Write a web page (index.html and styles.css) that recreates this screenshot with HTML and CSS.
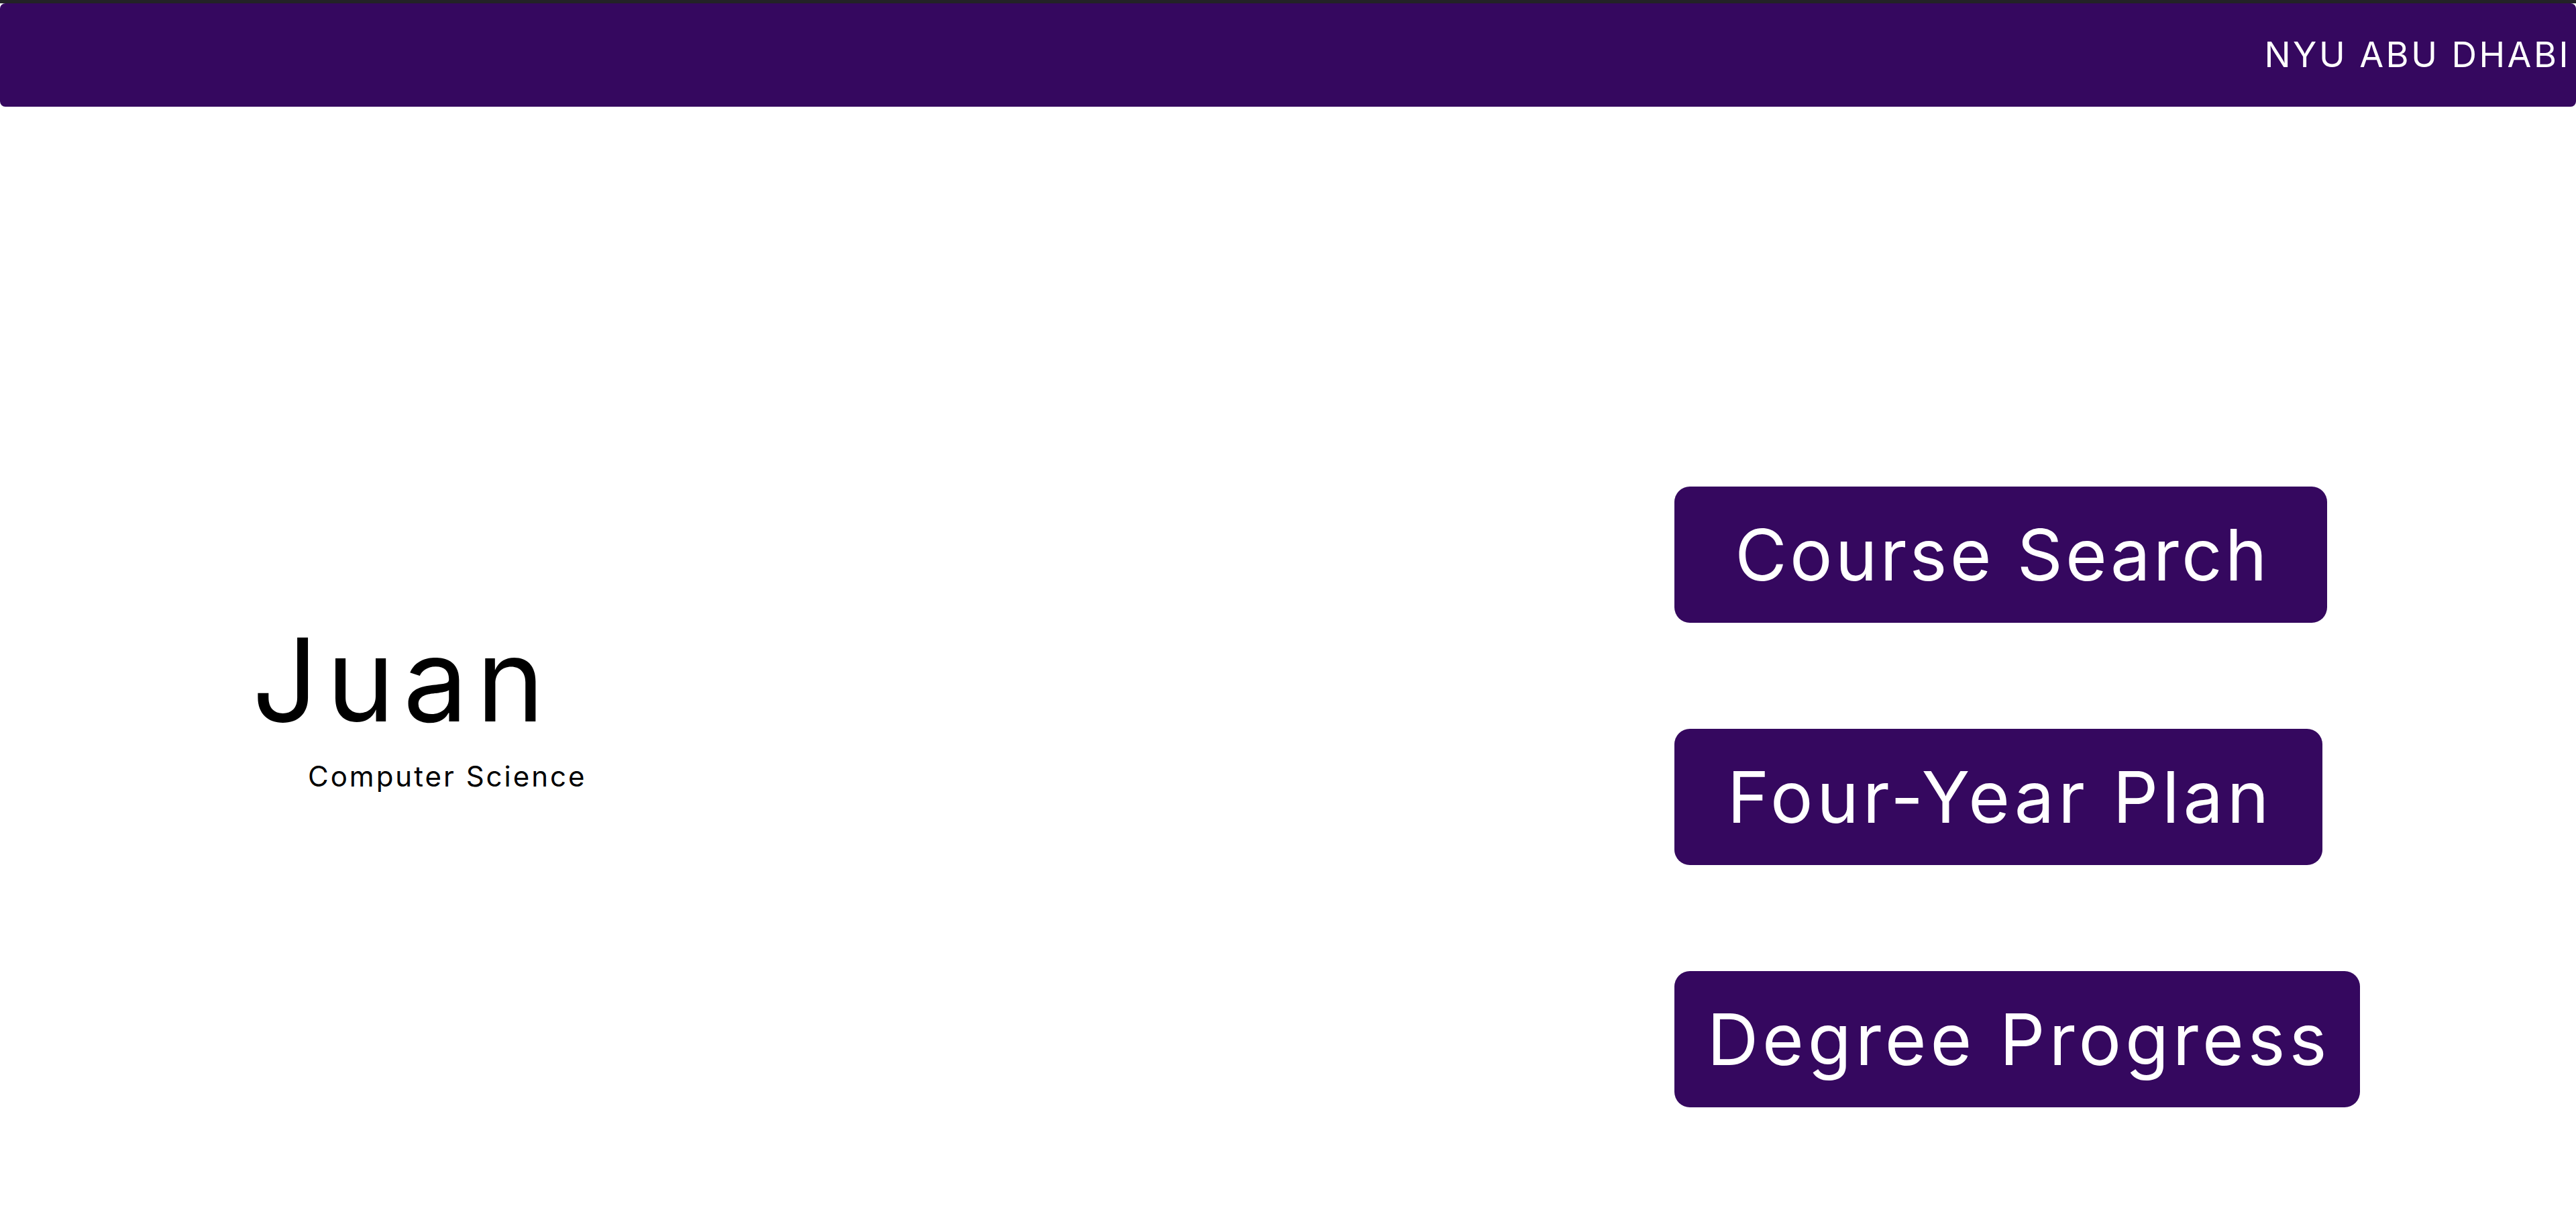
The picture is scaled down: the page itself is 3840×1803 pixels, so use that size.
FILE: index.html
```html
<!DOCTYPE html>
<html>
<head>
<meta charset="utf-8">
<link rel="stylesheet" href="styles.css">
</head>
<body>
<div class="topline"></div>
<header class="topbar"><span class="brand">NYU ABU DHABI</span></header>
<main class="content">
  <section class="profile">
    <h1 class="name">Juan</h1>
    <p class="major">Computer Science</p>
  </section>
  <nav class="actions">
    <a class="btn btn-search">Course Search</a>
    <a class="btn btn-plan">Four-Year Plan</a>
    <a class="btn btn-progress">Degree Progress</a>
  </nav>
</main>
</body>
</html>
```
FILE: styles.css
```css
html, body { margin: 0; padding: 0; background: #fff; }
body { font-family: "Inter", "Lato", "Liberation Sans", sans-serif; color: #000; }
.topline { height: 5px; background: #232327; }
.topbar { box-sizing: border-box; height: 154px; background: #35085f; border-radius: 8px; display: flex; align-items: center; justify-content: flex-end; padding-right: 8px; }
.brand { color: #fff; font-size: 52px; line-height: 1; letter-spacing: 3.5px; }
.content { display: flex; }
.profile { box-sizing: border-box; width: 2496px; padding-left: 376px; padding-top: 767px; }
.name { margin: 0; font-weight: 400; font-size: 172px; line-height: 1; letter-spacing: 12.5px; }
.major { margin: 38px 0 0 83px; font-size: 42px; line-height: 1; letter-spacing: 3px; }
.actions { display: flex; flex-direction: column; gap: 158px; padding-top: 566px; }
.btn { box-sizing: border-box; background: #35085f; color: #fff; font-size: 106px; line-height: 1; letter-spacing: 5px; border-radius: 23px; display: flex; align-items: center; justify-content: center; height: 203px; padding-left: 5px; }
.btn-search { width: 973px; letter-spacing: 4.2px; }
.btn-plan { width: 966px; letter-spacing: 5.8px; }
.btn-progress { width: 1022px; letter-spacing: 5.9px; }
```
